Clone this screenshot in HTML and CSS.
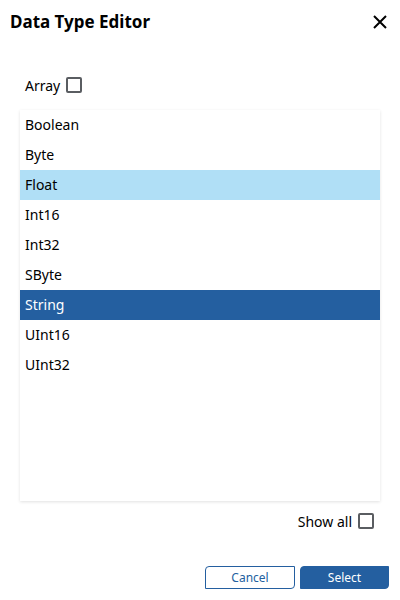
FILE: index.html
```html
<!DOCTYPE html>
<html>
<head>
<meta charset="utf-8">
<link rel="stylesheet" href="styles.css">
</head>
<body>
<div class="dialog">
  <div class="header">
    <h1 class="title">Data Type Editor</h1>
    <button class="close" aria-label="Close">
      <svg width="16" height="16" viewBox="0 0 16 16"><path d="M2 2 L14 14 M14 2 L2 14" stroke="#000" stroke-width="2" fill="none"/></svg>
    </button>
  </div>
  <label class="array-row">
    <span>Array</span>
    <span class="checkbox"></span>
  </label>
  <div class="list">
    <div class="item">Boolean</div>
    <div class="item">Byte</div>
    <div class="item hover">Float</div>
    <div class="item">Int16</div>
    <div class="item">Int32</div>
    <div class="item">SByte</div>
    <div class="item selected">String</div>
    <div class="item">UInt16</div>
    <div class="item">UInt32</div>
  </div>
  <label class="showall-row">
    <span>Show all</span>
    <span class="checkbox"></span>
  </label>
  <div class="buttons">
    <button class="btn cancel">Cancel</button>
    <button class="btn select">Select</button>
  </div>
</div>
</body>
</html>
```
FILE: styles.css
```css
html, body {
  margin: 0;
  padding: 0;
  background: #fff;
}
body {
  font-family: "Noto Sans", "Open Sans", sans-serif;
  color: #000;
  width: 400px;
  height: 600px;
  overflow: hidden;
}
.dialog {
  display: flex;
  flex-direction: column;
  height: 600px;
}
.header {
  display: flex;
  justify-content: space-between;
  align-items: center;
  padding: 8px 12px 0 10px;
  height: 28px;
}
.title {
  margin: 0;
  font-size: 17px;
  font-weight: 700;
  line-height: 28px;
}
.close {
  border: none;
  background: none;
  padding: 0;
  width: 16px;
  height: 16px;
  display: flex;
  cursor: pointer;
}
.array-row {
  display: flex;
  align-items: center;
  gap: 6px;
  font-size: 14px;
  padding-left: 25px;
  margin-top: 41px;
  height: 16px;
}
.checkbox {
  width: 12px;
  height: 12px;
  border: 2px solid #5a5d61;
  border-radius: 2px;
  display: inline-block;
}
.list {
  margin: 17px 20px 0 20px;
  height: 391px;
  box-shadow: 0 1px 3px rgba(0,0,0,0.12);
  background: #fff;
}
.item {
  height: 30px;
  line-height: 30px;
  font-size: 14px;
  padding-left: 5px;
}
.item.hover {
  background: #b0dff6;
}
.item.selected {
  background: #245fa0;
  color: #fff;
}
.showall-row {
  display: flex;
  justify-content: flex-end;
  align-items: center;
  gap: 6px;
  font-size: 14px;
  padding-right: 26px;
  margin-top: 12px;
  height: 16px;
}
.buttons {
  display: flex;
  justify-content: flex-end;
  gap: 5px;
  padding-right: 11px;
  margin-top: 37px;
}
.btn {
  font-family: "Noto Sans", "Open Sans", sans-serif;
  font-size: 12px;
  height: 23px;
  width: 90px;
  padding: 0;
  border-radius: 4px 0 4px 0;
  cursor: pointer;
}
.cancel {
  background: #fff;
  border: 1px solid #245fa0;
  color: #245fa0;
}
.select {
  background: #245fa0;
  border: 1px solid #245fa0;
  color: #fff;
  width: 89px;
}
```
